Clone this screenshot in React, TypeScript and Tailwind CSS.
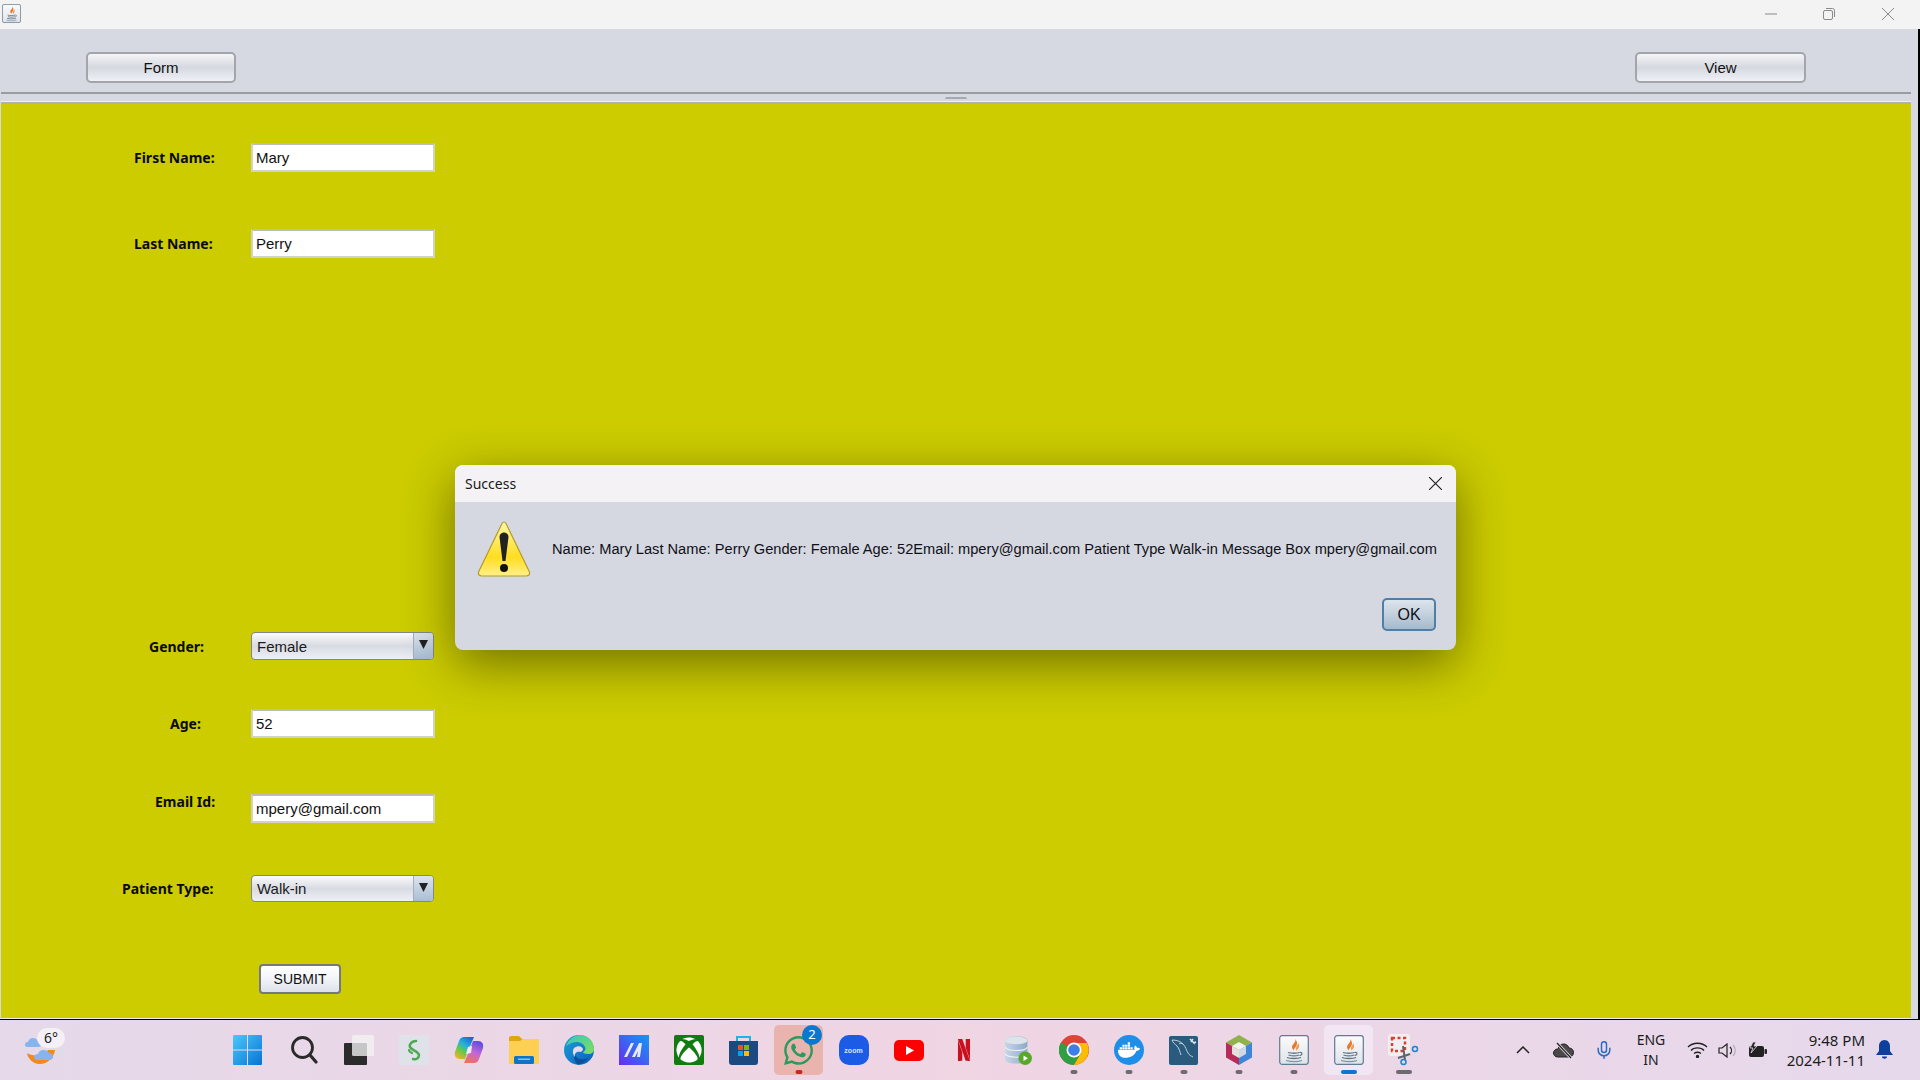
import { FaWhatsapp, FaDocker, FaXbox } from "react-icons/fa";
import { SiNetflix } from "react-icons/si";
import { Mic } from "lucide-react";

const JavaTile = ({ size = 30 }: { size?: number }) => (
  <svg width={size} height={size} viewBox="0 0 30 30">
    <defs>
      <linearGradient id="javaTile" x1="0" y1="0" x2="0" y2="1">
        <stop offset="0" stopColor="#fbfbfb" />
        <stop offset="1" stopColor="#dfe3e8" />
      </linearGradient>
    </defs>
    <rect x="0.7" y="0.7" width="28.6" height="28.6" rx="2.5" fill="url(#javaTile)" stroke="#5e7c92" strokeWidth="1.2" />
    <path d="M16 4c2 3-3 5-3 8 0 1.500 1 2.500 2 3.500-.5-2 3-4 3-7 0-2-1-3.500-2-4.500z" fill="#e8792b" />
    <path d="M19 8c.5 2-2.500 3.500-2 6 .2 1 .8 1.500 1 2-.2-1.500 2.500-3 2-5.500-.1-1-.5-2-1-2.500z" fill="#f09a52" />
    <path d="M9 17.500c3 1 9 1 11.500 0M9.500 20c3 1 8 1 10.500 0M8 22.500c3 1.300 11 1.300 14 0" fill="none" stroke="#5f7485" strokeWidth="1.300" />
    <path d="M20.500 17.500c3-.8 3.500 2.500 0 3" fill="none" stroke="#5f7485" strokeWidth="1.100" />
    <path d="M7 25.500c5 1.300 12 1.300 16 0" fill="none" stroke="#7f93a2" strokeWidth="1.100" />
  </svg>
);

const WeatherIcon = () => (
  <svg width="40" height="36" viewBox="0 0 40 36">
    <path d="M2 24c3 2 8 3 13 2 3-1 6-3 8-5l7 0c-1 8-8 14-15 14-7 0-12-5-13-11z" fill="#ef8a1f" />
    <path d="M12 31c-4 0-4-6 1-6 1-5 9-5 11-1 5 0 6 7 0 7z" fill="#86b4ec" />
    <path d="M2 18c-3 0-3-5 1-5 1-5 8-5 10-1 4 0 5 6 0 6z" fill="#86b4ec" />
  </svg>
);

const WindowsIcon = () => (
  <svg className="ml-[-2px]" width="29" height="30" viewBox="0 0 29 30">
    <defs>
      <linearGradient id="winBlue" x1="0" y1="0" x2="1" y2="1">
        <stop offset="0" stopColor="#4cc8fb" />
        <stop offset="1" stopColor="#0673d3" />
      </linearGradient>
    </defs>
    <path d="M1 0h13v14.500H0V1a1 1 0 0 1 1-1zM15 0h13a1 1 0 0 1 1 1v13.500H15zM0 15.500h14V30H1a1 1 0 0 1-1-1zM15 15.500h14V29a1 1 0 0 1-1 1H15z" fill="url(#winBlue)" />
  </svg>
);

const SearchIcon = () => (
  <svg width="28" height="30" viewBox="0 0 28 30" fill="none" stroke="#2a2a2a">
    <circle cx="12.500" cy="12.500" r="10" strokeWidth="2.800" />
    <path d="M20 20l6 7" strokeWidth="3.200" strokeLinecap="round" />
  </svg>
);

const TaskViewIcon = () => (
  <svg width="30" height="30" viewBox="0 0 30 30">
    <rect x="0" y="8" width="23" height="22" rx="1" fill="#2b2b2b" />
    <rect x="8" y="0" width="22" height="21" rx="1.500" fill="#f4f2f2" fillOpacity="0.78" />
  </svg>
);

const SIcon = () => (
  <svg width="30" height="30" viewBox="0 0 30 30">
    <rect width="30" height="30" rx="1" fill="#dfe2e9" />
    <path d="M17 6c-4 0-7 3-6 6 1 3 8 4 9 8 0 3-3 5-6 4" fill="none" stroke="#4ea84f" strokeWidth="2.500" strokeLinecap="round" />
    <path d="M13 18c-2-1-3-2-3-3" fill="none" stroke="#4ea84f" strokeWidth="2.200" strokeLinecap="round" />
  </svg>
);

const CopilotIcon = () => (
  <svg width="30" height="28" viewBox="0 0 30 28">
    <defs>
      <linearGradient id="copA" x1="0.8" y1="0" x2="0.2" y2="1">
        <stop offset="0" stopColor="#1767d8" />
        <stop offset="0.4" stopColor="#27b3d8" />
        <stop offset="0.65" stopColor="#63c94b" />
        <stop offset="1" stopColor="#f0b429" />
      </linearGradient>
      <linearGradient id="copB" x1="0.7" y1="0" x2="0.3" y2="1">
        <stop offset="0" stopColor="#5e4be0" />
        <stop offset="0.5" stopColor="#c566d8" />
        <stop offset="1" stopColor="#f5705a" />
      </linearGradient>
    </defs>
    <path d="M10 1h10l-6 14-3 8H6c-4 0-6-3-5-7l4-11c1-3 3-4 5-4z" fill="url(#copA)" />
    <path d="M20 27H10l6-14 3-8h5c4 0 6 3 5 7l-4 11c-1 3-3 4-5 4z" fill="url(#copB)" />
    <polygon points="14,11 18,10 17,17 12,18" fill="#f1ecf3" />
  </svg>
);

const FolderIcon = () => (
  <svg width="30" height="28" viewBox="0 0 30 28">
    <path d="M0 2a2 2 0 0 1 2-2h8l3 3h17v25H0z" fill="#e2a512" />
    <path d="M0 5h11l3-2h16v25H0z" fill="#fdd054" />
    <rect x="5" y="20" width="20" height="8" rx="1.500" fill="#0f74c7" />
    <rect x="9" y="22.500" width="12" height="1.500" fill="#7dc5f0" />
  </svg>
);

const EdgeIcon = () => (
  <svg width="30" height="30" viewBox="0 0 30 30">
    <defs>
      <linearGradient id="edgeA" x1="0" y1="0" x2="1" y2="1">
        <stop offset="0" stopColor="#3bc6c0" />
        <stop offset="1" stopColor="#7ee05a" />
      </linearGradient>
      <linearGradient id="edgeB" x1="0" y1="0" x2="1" y2="1">
        <stop offset="0" stopColor="#1aa0dd" />
        <stop offset="1" stopColor="#0a5fb5" />
      </linearGradient>
    </defs>
    <circle cx="15" cy="15" r="15" fill="url(#edgeB)" />
    <path d="M2 11C5 3 12 0 16 0c8 0 14 6 14 14 0 3-2 5-6 5-3 0-5-1-5-2 2-1 3-3 2-5-2-5-10-8-19-1z" fill="url(#edgeA)" />
    <path d="M11 18c0 4 4 7 9 6 2 0 4-1 5-2-3 5-8 8-12 7-3-4-4-8-2-11z" fill="#0d4f9c" />
    <path d="M10 13c4-3 8-2 9 1 0 1-1 2-2 3-4-1-7 1-6 5-2-2-3-6-1-9z" fill="#e6d9ea" />
  </svg>
);

const MIcon = () => (
  <svg width="30" height="30" viewBox="0 0 30 30">
    <defs>
      <linearGradient id="mGrad" x1="0" y1="1" x2="1" y2="0">
        <stop offset="0" stopColor="#6a2bf0" />
        <stop offset="1" stopColor="#0f9bf5" />
      </linearGradient>
    </defs>
    <rect width="30" height="30" fill="url(#mGrad)" />
    <path d="M5 22 12 8h3L8 22zM13 22l7-14h3l-2 14h-3l1-6-3 6z" fill="#e6e9ff" />
  </svg>
);

const XboxIcon = () => (
  <div className="flex h-[30px] w-[30px] items-center justify-center rounded-[2px] bg-[#107c10]">
    <FaXbox size={26} color="#ffffff" />
  </div>
);

const StoreIcon = () => (
  <svg width="29" height="30" viewBox="0 0 29 30">
    <path d="M8 6V2h13v4" fill="none" stroke="#23b1e8" strokeWidth="2" />
    <path d="M0 6h29v21a3 3 0 0 1-3 3H3a3 3 0 0 1-3-3z" fill="#1c4a80" />
    <rect x="9" y="10" width="5" height="5" fill="#f25022" />
    <rect x="15" y="10" width="5" height="5" fill="#7fba00" />
    <rect x="9" y="16" width="5" height="5" fill="#00a4ef" />
    <rect x="15" y="16" width="5" height="5" fill="#ffb900" />
  </svg>
);

const ZoomIcon = () => (
  <div className="flex h-[30px] w-[30px] items-center justify-center rounded-[10px] bg-[#1b5be6]">
    <span className="font-['Liberation_Sans',sans-serif] text-[7px] leading-none font-bold text-[#dbe6ff]">zoom</span>
  </div>
);

const YoutubeIcon = () => (
  <svg width="30" height="21" viewBox="0 0 30 21">
    <rect width="30" height="21" rx="5" fill="#ff0000" />
    <path d="M12 6l8 4.500-8 4.500z" fill="#ffffff" />
  </svg>
);

const DbIcon = () => (
  <svg width="27" height="29" viewBox="0 0 24 26">
    <defs>
      <linearGradient id="dbBody" x1="0" y1="0" x2="1" y2="0">
        <stop offset="0" stopColor="#c7d6e8" />
        <stop offset="1" stopColor="#8ea8c8" />
      </linearGradient>
    </defs>
    <path d="M0 4c0-5 20-5 20 0v17c0 5-20 5-20 0z" fill="url(#dbBody)" />
    <ellipse cx="10" cy="4" rx="10" ry="3.500" fill="#dde3ea" />
    <path d="M0 10c2 4 18 4 20 0M0 16c2 4 18 4 20 0" fill="none" stroke="#eef2f7" strokeWidth="1" />
    <circle cx="18" cy="20" r="6" fill="#58a82c" />
    <path d="M16.500 17.500l4 2.500-4 2.500z" fill="#ffffff" />
  </svg>
);

const ChromeIcon = () => (
  <svg width="30" height="30" viewBox="0 0 30 30">
    <circle cx="15" cy="15" r="15" fill="#db4437" />
    <path d="M15 15 2 7.500A15 15 0 0 0 15 30l7.500-13z" fill="#2f9e44" />
    <path d="M15 8h13a15 15 0 0 1-13 22l7-12z" fill="#fbbc04" />
    <circle cx="15" cy="15" r="7.500" fill="#ffffff" />
    <circle cx="15" cy="15" r="5.800" fill="#3f7ee8" />
  </svg>
);

const DockerIcon = () => (
  <div className="flex h-[30px] w-[30px] items-center justify-center rounded-full bg-[#1d8fe8]">
    <FaDocker size={22} color="#ffffff" />
  </div>
);

const MysqlIcon = () => (
  <svg width="29" height="29" viewBox="0 0 29 29">
    <rect width="29" height="29" rx="2" fill="#2a5a7c" />
    <path d="M3 4c4 0 8 1 11 4 3 3 3 6 5 9 1 2 3 3 5 4M3 4c1 3 3 4 5 6 2 2 3 6 4 9M14 8c-1-1-3-1-4 0" fill="none" stroke="#c9dbe6" strokeWidth="0.900" />
    <path d="M21 3l5 5M24 3l-2 3M27 6l-3 1" fill="none" stroke="#dce8ef" strokeWidth="1.500" />
  </svg>
);

const NetbeansIcon = () => (
  <svg width="28" height="30" viewBox="0 0 28 30">
    <polygon points="14,0 27,7.500 14,15 1,7.500" fill="#8fb24a" />
    <polygon points="1,7.500 14,15 14,30 1,22.500" fill="#b52c5b" />
    <polygon points="27,7.500 14,15 14,30 27,22.500" fill="#3f86d6" />
    <polygon points="14,7 21,11 14,15 7,11" fill="#f2f2ef" />
    <polygon points="7,11 14,15 14,23 7,19" fill="#e4e1dc" />
    <polygon points="21,11 14,15 14,23 21,19" fill="#cfd9e6" />
  </svg>
);

const SnipIcon = () => (
  <svg width="32" height="32" viewBox="0 0 32 32">
    <rect x="0" y="0" width="22" height="22" rx="3" fill="#f1eff2" />
    <rect x="4" y="4" width="13" height="13" fill="none" stroke="#d9412d" strokeWidth="2.500" strokeDasharray="3 2.500" />
    <path d="M15 12 17 26M22 20 10 24" stroke="#5f6368" strokeWidth="2" />
    <circle cx="27" cy="15" r="2.500" fill="none" stroke="#1a83d8" strokeWidth="1.500" />
    <circle cx="15.500" cy="28" r="2.500" fill="none" stroke="#1a83d8" strokeWidth="1.500" />
  </svg>
);

const FieldBox = ({ value }: { value: string }) => (
  <div className="flex h-[29px] w-[184px] items-center border-2 border-[#bcbcbc] border-r-[#d2d2c6] border-b-[#d2d2c6] border-l-[#d2d2c6] bg-white pt-[2px] pl-[3px] text-[15px] text-[#111]">
    {value}
  </div>
);

const ComboBox = ({ value, height }: { value: string; height: string }) => (
  <div className={`${height} flex w-[183px] overflow-hidden rounded-[4px] border border-[#83878d] bg-linear-to-b from-[#fafbfc] via-[#d8dbe2] to-[#eef0f6] text-[15px] text-[#1a1a22]`}>
    <div className="flex flex-1 items-center pt-[2px] pl-[5px]">{value}</div>
    <div className="flex w-[20px] justify-center border-l border-[#a4adb8] bg-linear-to-b from-[#dde5ee] to-[#a9bed3] pt-[7px]">
      <svg width="9" height="9" viewBox="0 0 9 9">
        <path d="M0 0h9L4.500 9z" fill="#222" />
      </svg>
    </div>
  </div>
);

const ToolButton = ({ label, width }: { label: string; width: string }) => (
  <div className={`${width} flex h-[31px] items-center justify-center rounded-[5px] border-2 border-[#a3a5aa] bg-linear-to-b from-[#f4f5f7] via-[#d5d8df] to-[#eff1f7] pt-[2px] text-[15px] text-[#111]`}>
    {label}
  </div>
);

const FormRow = ({ label, offset, top, children }: { label: string; offset: string; top: string; children: React.ReactNode }) => (
  <div className={`${top} flex items-center`}>
    <div className={`${offset} w-[250px] text-[14px] font-bold text-[#0a0a00]`} style={{ fontFamily: '"Noto Sans", sans-serif' }}>
      {label}
    </div>
    {children}
  </div>
);

const TaskIcon = ({ children, dot, box }: { children: React.ReactNode; dot?: string; box?: string }) => (
  <div className="relative flex h-[50px] w-[55px] items-center justify-center">
    {box && <div className={`absolute inset-y-0 left-[3px] w-[49px] rounded-[5px] ${box}`} />}
    <div className="relative flex items-center justify-center">{children}</div>
    {dot && <div className={`absolute bottom-[1px] left-1/2 h-[4px] -translate-x-1/2 rounded-full ${dot}`} />}
  </div>
);

export default function App() {
  return (
    <div className="relative flex h-screen w-[1920px] flex-col overflow-hidden font-['Liberation_Sans',Arial,sans-serif]">
      {/* window title */}
      <div className="flex h-[29px] items-start bg-[#f3f3f3]">
        <div className="mt-[4px] ml-[2px] h-[19px] w-[20px]">
          <JavaTile size={19} />
        </div>
        <div className="ml-auto flex text-[#8a8a8a]">
          <svg className="mt-[13px] mr-[46px]" width="12" height="2" viewBox="0 0 12 2">
            <path d="M0 1h12" stroke="#8a8a8a" strokeWidth="1" />
          </svg>
          <svg className="mt-[8px] mr-[47px]" width="12" height="12" viewBox="0 0 12 12" fill="none" stroke="#8a8a8a">
            <rect x="0.500" y="2.500" width="9" height="9" rx="1.500" />
            <path d="M3 .5h6.500a2 2 0 0 1 2 2V9" />
          </svg>
          <svg className="mt-[8px] mr-[26px]" width="12" height="12" viewBox="0 0 12 12" stroke="#8a8a8a">
            <path d="M0 0l12 12M12 0 0 12" />
          </svg>
        </div>
      </div>

      {/* app frame */}
      <div className="flex h-[990px] bg-black">
        <div className="flex h-full w-[1918px] flex-col bg-[#d6d9e1] pr-[7px] pl-px">
          <div className="flex h-[65px] justify-between border-b-2 border-[#9a9ca2] pt-[23px] pr-[105px] pl-[85px]">
            <ToolButton label="Form" width="w-[150px]" />
            <ToolButton label="View" width="w-[171px]" />
          </div>
          <div className="flex h-[8px] justify-center border-b border-[#eef0f4] pt-[3px]">
            <div className="ml-[-1px] h-[2px] w-[22px] rounded-t-[2px] bg-[#a6a8ae]" />
          </div>
          <div className="h-[917px] border-t-2 border-b border-[#b0b2a8] border-b-[#eeeeee] bg-[#cccc00] pt-[39px]">
            <FormRow label="First Name:" offset="pl-[133px]" top="mt-0">
              <FieldBox value="Mary" />
            </FormRow>
            <FormRow label="Last Name:" offset="pl-[133px]" top="mt-[57px]">
              <FieldBox value="Perry" />
            </FormRow>
            <FormRow label="Gender:" offset="pl-[148px]" top="mt-[374px]">
              <ComboBox value="Female" height="h-[28px]" />
            </FormRow>
            <FormRow label="Age:" offset="pl-[169px]" top="mt-[49px]">
              <FieldBox value="52" />
            </FormRow>
            <FormRow label="Email Id:" offset="pl-[154px] mt-[-14px]" top="mt-[56px]">
              <FieldBox value="mpery@gmail.com" />
            </FormRow>
            <FormRow label="Patient Type:" offset="pl-[121px]" top="mt-[52px]">
              <ComboBox value="Walk-in" height="h-[27px]" />
            </FormRow>
            <div className="mt-[62px] ml-[258px] flex h-[30px] w-[82px] items-center justify-center rounded-[4px] border-2 border-[#76787c] bg-linear-to-b from-white via-[#f2f4f8] to-[#dde1ea] text-[14px] text-[#111]">
              SUBMIT
            </div>
          </div>
        </div>
      </div>

      {/* taskbar */}
      <div className="flex h-[61px] items-center border-t border-black bg-linear-to-r from-[#e5d9ea] via-[#f0d5e3] to-[#e6d9ec] pl-[221px]">
        <div className="absolute top-[1029px] left-[25px] h-[36px] w-[40px]">
          <WeatherIcon />
          <div className="absolute top-[-1px] left-[12px] flex h-[20px] w-[28px] items-center justify-center rounded-full bg-[#f4f0f6] text-[14px] leading-none text-[#222]" style={{ fontFamily: '"Noto Sans", sans-serif' }}>
            6°
          </div>
        </div>

        <TaskIcon><WindowsIcon /></TaskIcon>
        <TaskIcon><SearchIcon /></TaskIcon>
        <TaskIcon><TaskViewIcon /></TaskIcon>
        <TaskIcon><SIcon /></TaskIcon>
        <TaskIcon><CopilotIcon /></TaskIcon>
        <TaskIcon><FolderIcon /></TaskIcon>
        <TaskIcon><EdgeIcon /></TaskIcon>
        <TaskIcon><MIcon /></TaskIcon>
        <TaskIcon><XboxIcon /></TaskIcon>
        <TaskIcon><StoreIcon /></TaskIcon>
        <TaskIcon box="bg-[#e9b3ae]" dot="w-[7px] bg-[#c42b1c]">
          <FaWhatsapp size={33} color="#2a9a5f" />
          <div className="absolute top-[-9px] right-[-7px] flex h-[20px] w-[20px] items-center justify-center rounded-full bg-[#0a78d0] text-[13px] text-white" style={{ fontFamily: '"Noto Sans", sans-serif' }}>2</div>
        </TaskIcon>
        <TaskIcon><ZoomIcon /></TaskIcon>
        <TaskIcon><YoutubeIcon /></TaskIcon>
        <TaskIcon><SiNetflix size={22} color="#c8101e" /></TaskIcon>
        <TaskIcon><DbIcon /></TaskIcon>
        <TaskIcon dot="w-[7px] bg-[#6d6b70]"><ChromeIcon /></TaskIcon>
        <TaskIcon dot="w-[7px] bg-[#6d6b70]"><DockerIcon /></TaskIcon>
        <TaskIcon dot="w-[7px] bg-[#6d6b70]"><MysqlIcon /></TaskIcon>
        <TaskIcon dot="w-[7px] bg-[#6d6b70]"><NetbeansIcon /></TaskIcon>
        <TaskIcon dot="w-[7px] bg-[#6d6b70]"><JavaTile /></TaskIcon>
        <TaskIcon box="bg-[#f2e6f5]" dot="w-[16px] bg-[#0a78d0]"><JavaTile /></TaskIcon>
        <TaskIcon dot="w-[16px] bg-[#6d6b70]"><SnipIcon /></TaskIcon>

        {/* system tray */}
        <div className="ml-[85px] flex h-full items-center text-[#1c1c1c]" style={{ fontFamily: '"Noto Sans", sans-serif' }}>
          <svg width="14" height="8" viewBox="0 0 14 8" fill="none" stroke="#222" strokeWidth="1.500">
            <path d="M1 7l6-6 6 6" />
          </svg>
          <svg className="ml-[23px]" width="21" height="17" viewBox="0 0 21 17">
            <path d="M5 15c-6 0-6-8 0-8 1-6 9-7 11-1 6 0 6 9 0 9z" fill="#4a4a4a" stroke="#222" strokeWidth="1" />
            <path d="M3 0l16 17" stroke="#e6d9ea" strokeWidth="3" />
            <path d="M4 1l14 15" stroke="#222" strokeWidth="1.200" />
          </svg>
          <Mic className="ml-[20px]" size={20} color="#2b6bc4" strokeWidth={1.800} />
          <div className="ml-[20px] w-[34px] text-center text-[14px] leading-[20px]">
            <div>ENG</div>
            <div>IN</div>
          </div>
          <svg className="ml-[19px]" width="21" height="16" viewBox="0 0 21 16" fill="none" stroke="#222" strokeWidth="1.400">
            <path d="M1 5c5-5 14-5 19 0M4 8.500c3-3.500 10-3.500 13 0M7 11.500c2-1.500 5-1.500 7 0" />
            <circle cx="10.500" cy="14.500" r="1" fill="#222" />
          </svg>
          <svg className="ml-[10px]" width="21" height="15" viewBox="0 0 21 15" fill="none" stroke="#222" strokeWidth="1.200">
            <path d="M1 5h3l5-4v13l-5-4H1z" />
            <path d="M12 4c2 2 2 5 0 7" />
            <path d="M15 2c3 3 3 8 0 11" stroke="#b5adb8" />
          </svg>
          <svg className="ml-[9px]" width="20" height="16" viewBox="0 0 20 16">
            <rect x="1" y="4" width="15" height="11" rx="2" fill="#222" />
            <rect x="16.500" y="7" width="2.500" height="5" rx="1" fill="#222" />
            <path d="M5 0 2 6h3L3 11l6-7H6l2-4z" fill="#222" stroke="#e6d9ea" strokeWidth="0.800" />
          </svg>
          <div className="ml-[18px] w-[79px] text-right text-[15px] leading-[20px] whitespace-nowrap">
            <div>9:48 PM</div>
            <div>2024-11-11</div>
          </div>
          <svg className="ml-[11px]" width="17" height="20" viewBox="0 0 17 20">
            <path d="M8.500 0C5 0 3 3 3 6v5l-3 4h17l-3-4V6c0-3-2-6-5.500-6z" fill="#0f3f9c" />
            <path d="M6 16.500h5c0 3-5 3-5 0z" fill="#0f3f9c" />
          </svg>
        </div>
      </div>

      {/* message dialog */}
      <div className="absolute top-[465px] left-[455px] flex h-[185px] w-[1001px] flex-col overflow-hidden rounded-[8px] bg-[#d5d8e0] shadow-[0_14px_50px_rgba(0,0,0,0.45)]">
        <div className="flex h-[37px] items-center justify-between bg-[#f5f2f6] pr-[14px] pl-[10px]">
          <span className="text-[14px] text-[#1a1a1a]" style={{ fontFamily: '"Noto Sans", sans-serif' }}>Success</span>
          <svg width="13" height="13" viewBox="0 0 13 13" stroke="#1a1a1a" strokeWidth="1.100">
            <path d="M0 0l13 13M13 0 0 13" />
          </svg>
        </div>
        <div className="flex items-center pt-[19px] pl-[21px]">
          <svg width="56" height="56" viewBox="0 0 54 56">
            <defs>
              <linearGradient id="warn" x1="0" y1="0" x2="0" y2="1">
                <stop offset="0" stopColor="#fff8a8" />
                <stop offset="0.65" stopColor="#ffdd20" />
                <stop offset="1" stopColor="#fff08a" />
              </linearGradient>
            </defs>
            <path d="M27 1c1 0 2 1 2.500 2.500L52 50c1.500 3 0 5-3 5H5c-3 0-4.500-2-3-5L24.500 3.500C25 2 26 1 27 1z" fill="url(#warn)" stroke="#b59a2a" strokeWidth="1.200" />
            <path d="M22.500 16c0-6 9-6 9 0l-3 24h-3z" fill="#222" />
            <circle cx="27" cy="47" r="4" fill="#111" />
          </svg>
          <div className="ml-[20px] pt-[2px] text-[14.650px] whitespace-nowrap text-[#101018]">
            Name: Mary Last Name: Perry Gender: Female Age: 52Email: mpery@gmail.com Patient Type Walk-in Message Box mpery@gmail.com
          </div>
        </div>
        <div className="mt-[21px] flex justify-end pr-[20px]">
          <div className="flex h-[33px] w-[54px] items-center justify-center rounded-[5px] border-2 border-[#4f7fa8] bg-linear-to-b from-[#dde4ec] via-[#c3d0dc] to-[#a4bacd] text-[16px] text-[#101018]">
            OK
          </div>
        </div>
      </div>
    </div>
  );
}
